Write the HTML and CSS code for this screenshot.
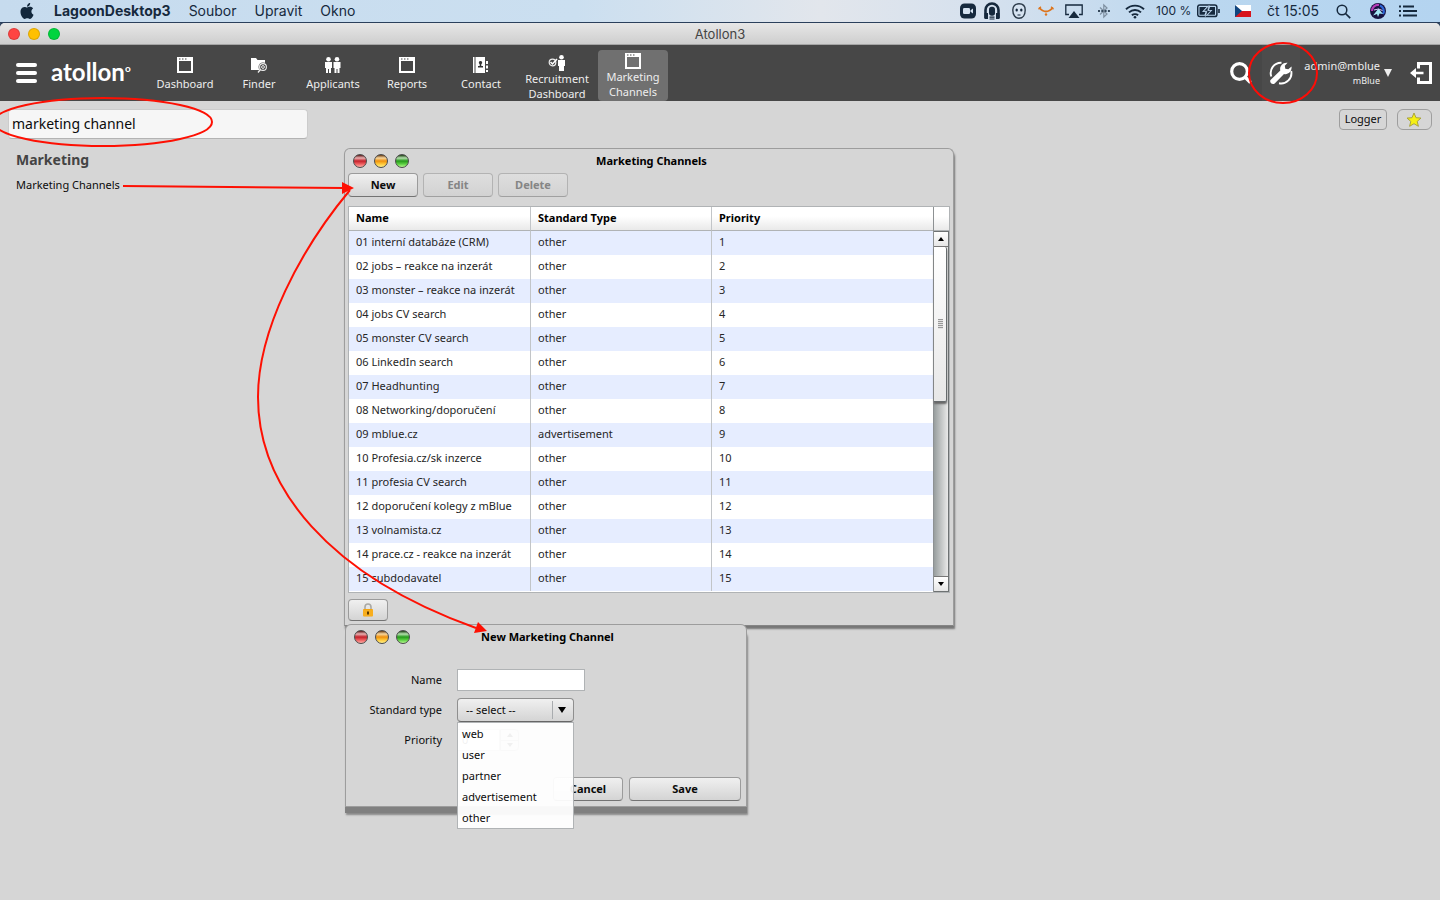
FILE: index.html
```html
<!DOCTYPE html>
<html lang="en">
<head>
<meta charset="utf-8">
<title>Atollon3</title>
<link rel="stylesheet" href="styles.css">
</head>
<body>
<header class="menubar">
  <nav class="menus">
    <svg class="apple" viewBox="0 0 24 24" width="16" height="16"><path fill="#13283c" d="M12.152 6.896c-.948 0-2.415-1.078-3.96-1.04-2.04.027-3.91 1.183-4.961 3.014-2.117 3.675-.546 9.103 1.519 12.09 1.013 1.454 2.208 3.09 3.792 3.039 1.52-.065 2.09-.987 3.935-.987 1.831 0 2.35.987 3.96.948 1.637-.026 2.676-1.48 3.676-2.948 1.156-1.688 1.636-3.325 1.662-3.415-.039-.013-3.182-1.221-3.22-4.857-.026-3.04 2.48-4.494 2.597-4.559-1.429-2.09-3.623-2.324-4.39-2.376-2-.156-3.675 1.09-4.61 1.09zM15.53 3.83c.843-1.012 1.4-2.427 1.245-3.83-1.207.052-2.662.805-3.532 1.818-.78.896-1.454 2.338-1.273 3.714 1.338.104 2.715-.688 3.559-1.701"/></svg>
    <strong>LagoonDesktop3</strong><span>Soubor</span><span>Upravit</span><span>Okno</span>
  </nav>
  <div class="status">
    <span class="slot s24"><svg width="16" height="16" viewBox="0 0 16 16"><rect width="16" height="15" y=".5" rx="4.5" fill="#16293d"/><rect x="3" y="5" width="7" height="6" rx="1.3" fill="#d5e2f0"/><path d="M10.5 7.3 13 5.4v5.2l-2.5-1.9z" fill="#d5e2f0"/></svg></span>
    <span class="slot s24"><svg width="16" height="18" viewBox="0 0 16 18"><path d="M1.500 16V8a6.500 6.500 0 0 1 13 0v8" fill="none" stroke="#16293d" stroke-width="2.600"/><path d="M.5 11v6h3.500v-6zM12 11v6h3.500v-6z" fill="#16293d"/><rect x="5" y="4.800" width="6" height="9" rx="2.800" fill="#16293d"/><path d="M5.500 15.200h5M5.500 17h5" stroke="#16293d" stroke-width="1.200"/></svg></span>
    <span class="slot s30"><svg width="14" height="16" viewBox="0 0 14 16"><path d="M7 .8c4 0 6.200 2.300 6.200 6.200 0 5-2.500 8.200-6.200 8.200S.8 12 .8 7C.8 3.100 3 .8 7 .8z" fill="#d5e2f0" stroke="#2b3a49" stroke-width="1.400"/><ellipse cx="4.700" cy="7" rx="1.200" ry="1.500" fill="#16293d"/><ellipse cx="9.300" cy="7" rx="1.200" ry="1.500" fill="#16293d"/><path d="M5.500 12h3" stroke="#16293d"/></svg></span>
    <span class="slot s24"><svg width="16" height="12" viewBox="0 0 16 12"><path d="M1 2.500q7 8 14 0" fill="none" stroke="#dd741c" stroke-width="1.800"/><path d="M.5 4.200 3 1.800M15.500 4.200 13 1.800" stroke="#dd741c" stroke-width="1.200"/><circle cx="8" cy="9.500" r="1.200" fill="#dd741c"/></svg></span>
    <span class="slot s32"><svg width="18" height="15" viewBox="0 0 18 15"><path d="M4 10.500H.8V1h16.400v9.500H14" fill="none" stroke="#16293d" stroke-width="1.300"/><path d="M9 7 14.500 14h-11z" fill="#16293d"/></svg></span>
    <span class="slot s28"><svg width="12" height="16" viewBox="0 0 12 16"><path d="m2 4.500 7 6.500-3.200 3V2L9 5 2 11.500" fill="none" stroke="#7f90a1" stroke-width="1.200"/><path d="M0 8h12" stroke="#34475a" stroke-width="2" stroke-dasharray="2 1.300"/></svg></span>
    <span class="slot s34"><svg width="20" height="15" viewBox="0 0 20 15"><path d="M1 5.200a13 13 0 0 1 18 0M4 8.400a8.800 8.800 0 0 1 12 0M6.900 11.300a4.600 4.600 0 0 1 6.200 0" fill="none" stroke="#16293d" stroke-width="1.900"/><circle cx="10" cy="13.300" r="1.300" fill="#16293d"/></svg></span>
    <span class="battery-text">100 %</span>
    <span class="slot s30"><svg width="23" height="14" viewBox="0 0 23 14"><rect x=".7" y="1" width="19.200" height="11.600" rx="2.200" fill="none" stroke="#16293d" stroke-width="1.500"/><path d="M2.500 3h7L5 8h3.500L7.500 10.700h-5zM13 3h5v7.700h-7L15.500 6H12z" fill="#16293d"/><path d="m12 1.500-5.500 5.700h3.300L8.400 12.500l5.800-6h-3.400z" fill="#16293d" stroke="#c3daef" stroke-width=".7"/><path d="M22 5v4" stroke="#16293d" stroke-width="1.600"/></svg></span>
    <span class="slot s40"><svg width="16" height="12" viewBox="0 0 16 12"><path fill="#fff" d="M0 0h16v6H0z"/><path fill="#d8141c" d="M0 6h16v6H0z"/><path fill="#11457e" d="m0 0 7 6-7 6z"/></svg></span>
    <span class="clock">čt 15:05</span>
    <span class="slot s36"><svg width="15" height="15" viewBox="0 0 15 15"><circle cx="6" cy="6" r="4.800" fill="none" stroke="#16293d" stroke-width="1.500"/><path d="m9.500 9.500 4.700 4.700" stroke="#16293d" stroke-width="1.700"/></svg></span>
    <span class="slot s30"><svg width="16" height="16" viewBox="0 0 16 16"><circle cx="8" cy="8" r="8" fill="#171340"/><path d="M2 8a6 6 0 0 1 7-6" stroke="#b53bb5" stroke-width="2.200" fill="none"/><path d="M10 2.500A6 6 0 0 1 13 11" stroke="#2f66d8" stroke-width="2.200" fill="none"/><path d="M8.500 5.500 3 12.500l4-1.500 1 3 1.500-3.500 3.500.5z" fill="#a5e8f6"/><path d="m4 7 4.500-1 4 1.500" stroke="#d8c6f6" fill="none"/></svg></span>
    <span class="slot s30"><svg width="18" height="12" viewBox="0 0 18 12"><path d="M0 1.500h2M0 6h2M0 10.500h2M4 1.500h11M4 6h14M4 10.500h14" stroke="#16293d" stroke-width="1.800"/></svg></span>
  </div>
</header>

<div class="titlebar">
  <div class="lights"><i class="red"></i><i class="amber"></i><i class="green"></i></div>
  <span>Atollon3</span>
</div>

<div class="toolbar">
  <button class="burger" aria-label="Menu"><i></i><i></i><i></i></button>
  <div class="brand">atollon<sup>o</sup></div>
  <nav class="apps">
    <button class="app"><svg width="16" height="16" viewBox="0 0 16 16"><use href="#frame"/></svg>Dashboard</button>
    <button class="app"><svg width="18" height="16" viewBox="0 0 18 16"><path d="M1 1h5l1.500 2H15v10H1z" fill="#fff"/><circle cx="13" cy="10" r="4.500" fill="#474747"/><circle cx="13" cy="10" r="3.400" fill="none" stroke="#eee" stroke-width="1.100"/><circle cx="13" cy="10" r="1.400" fill="none" stroke="#eee"/><path d="m10.500 12.500-2.500 3" stroke="#eee" stroke-width="1.300"/></svg>Finder</button>
    <button class="app"><svg width="18" height="16" viewBox="0 0 18 16"><g fill="#fff"><circle cx="4.500" cy="2.300" r="2.300"/><circle cx="13" cy="2.300" r="2.300"/><path d="M1 5h7v6H7v5H5v-4H4v4H2v-5H1zM9.500 5h7v6h-1v5h-2v-4h-1v4h-2v-5h-1z"/></g></svg>Applicants</button>
    <button class="app"><svg width="16" height="16" viewBox="0 0 16 16"><use href="#frame"/></svg>Reports</button>
    <button class="app"><svg width="16" height="16" viewBox="0 0 16 16"><path fill="#fff" d="M0 0h1.500v16H0zM2.500 0H12v16H2.500zM13 4h2v3h-2zM13 8.500h2v3h-2zM13 13h2v2h-2z"/><path fill="#333" d="M7.500 4a1.700 1.700 0 0 1 .8 3.200V9H10v1.500H5V9h1.700V7.200A1.700 1.700 0 0 1 7.500 4z"/></svg>Contact</button>
    <button class="app wide"><svg width="18" height="16" viewBox="0 0 18 16"><circle cx="4.500" cy="7.500" r="3.300" fill="none" stroke="#eee" stroke-width="1.200"/><path d="m2.500 7 2 2L9 4" fill="none" stroke="#fff" stroke-width="1.500"/><circle cx="13.500" cy="2.300" r="2.300" fill="#fff"/><path d="M10 5h7v6h-1v5h-5v-5h-1z" fill="#fff"/></svg>Recruitment Dashboard</button>
    <button class="app active"><svg width="16" height="16" viewBox="0 0 16 16"><g id="frame"><path d="M0 0h16v16H0zM2 4v10h12V4z" fill="#fff" fill-rule="evenodd"/><path d="M2 2h1.500M5 2h1.500M8 2h1.500" stroke="#474747" stroke-width="1.200"/></g></svg>Marketing Channels</button>
  </nav>
  <div class="tools">
    <button class="tool" aria-label="Search"><svg width="22" height="22" viewBox="0 0 22 22"><circle cx="9.500" cy="9.500" r="7.800" fill="none" stroke="#fff" stroke-width="3.200"/><path d="m15 15 5.500 5.500" stroke="#fff" stroke-width="3.600"/></svg></button>
    <button class="tool wrench" aria-label="Settings"><svg width="24" height="24" viewBox="0 0 24 24"><path d="M2.300 15.500A10.300 10.300 0 0 1 12.500 1.800M22.200 10A10.300 10.300 0 0 1 10 22.200" fill="none" stroke="#fff" stroke-width="1.900"/><path d="M1.500 19 11.300 9.500C10.300 5.500 13.500 1 18.600 1.800L15.800 4.800l.5 3 3 .5L22.500 5.400c.8 5-3.500 8.700-7.500 7.600L5.700 22.400C3.300 24 .2 21.500 1.500 19z" fill="#fff"/></svg>
      <svg class="ring" width="74" height="64" viewBox="0 0 74 64"><ellipse cx="37" cy="32" rx="34" ry="30" fill="none" stroke="#fe0c06" stroke-width="2"/></svg></button>
    <button class="account"><span>admin@mblue</span><small>mBlue</small></button>
    <i class="caret"></i>
    <button class="tool exit" aria-label="Log out"><svg width="24" height="24" viewBox="0 0 24 24"><path d="M9.500 7.500v-5h12v19h-12v-5" fill="none" stroke="#fff" stroke-width="3"/><path d="M14.500 10.700v2.600H7V17L1 12l6-5v3.700z" fill="#fff"/></svg></button>
  </div>
</div>

<main class="desktop">
  <div class="top-row">
    <input class="search" type="text" aria-label="Search settings" value="marketing channel">
    <div class="quick"><button class="logger">Logger</button><button class="star" aria-label="Favourite"><svg width="16" height="15" viewBox="0 0 16 15"><path d="m8 1 2 4.700 5 .4-3.800 3.300 1.200 4.900L8 11.700l-4.400 2.600 1.200-4.900L1 6.100l5-.4z" fill="#f6f013" stroke="#a8a340"/></svg></button></div>
  </div>
  <section class="results">
    <h2>Marketing</h2>
    <a href="#channels">Marketing Channels</a>
  </section>

  <section class="window channels" id="channels">
    <div class="window-title"><div class="orbs"><i class="o-red"></i><i class="o-amber"></i><i class="o-green"></i></div><h3>Marketing Channels</h3></div>
    <div class="actions"><button class="btn">New</button><button class="btn" disabled>Edit</button><button class="btn" disabled>Delete</button></div>
    <div class="grid">
      <div class="table-clip">
      <table>
        <colgroup><col class="c-name"><col class="c-type"><col></colgroup>
        <thead><tr><th>Name</th><th>Standard Type</th><th>Priority</th></tr></thead>
        <tbody>
          <tr><td>01 interní databáze (CRM)</td><td>other</td><td>1</td></tr>
          <tr><td>02 jobs – reakce na inzerát</td><td>other</td><td>2</td></tr>
          <tr><td>03 monster – reakce na inzerát</td><td>other</td><td>3</td></tr>
          <tr><td>04 jobs CV search</td><td>other</td><td>4</td></tr>
          <tr><td>05 monster CV search</td><td>other</td><td>5</td></tr>
          <tr><td>06 LinkedIn search</td><td>other</td><td>6</td></tr>
          <tr><td>07 Headhunting</td><td>other</td><td>7</td></tr>
          <tr><td>08 Networking/doporučení</td><td>other</td><td>8</td></tr>
          <tr><td>09 mblue.cz</td><td>advertisement</td><td>9</td></tr>
          <tr><td>10 Profesia.cz/sk inzerce</td><td>other</td><td>10</td></tr>
          <tr><td>11 profesia CV search</td><td>other</td><td>11</td></tr>
          <tr><td>12 doporučení kolegy z mBlue</td><td>other</td><td>12</td></tr>
          <tr><td>13 volnamista.cz</td><td>other</td><td>13</td></tr>
          <tr><td>14 prace.cz - reakce na inzerát</td><td>other</td><td>14</td></tr>
          <tr><td>15 subdodavatel</td><td>other</td><td>15</td></tr>
        </tbody>
      </table>
      </div>
      <div class="side">
        <div class="cap"></div>
        <div class="scroll"><button class="arrow" aria-label="Scroll up"><i class="up"></i></button><div class="track"><div class="thumb"><i></i></div></div><button class="arrow" aria-label="Scroll down"><i class="down"></i></button></div>
      </div>
    </div>
    <button class="btn lock" aria-label="Lock"><svg width="12" height="14" viewBox="0 0 12 14"><path d="M3 7V4a3 3 0 0 1 6 0v3" fill="none" stroke="#aaa9a4" stroke-width="1.600"/><rect x="1" y="6" width="10" height="7.500" rx="1" fill="#f5a50f"/><path d="M1 8h10M1 10h10M1 12h10" stroke="#ffc545" stroke-width=".6"/><path d="M5 8.500h2v3H5z" fill="#5b3900"/></svg></button>
  </section>

  <section class="window dialog">
    <div class="window-title"><div class="orbs"><i class="o-red"></i><i class="o-amber"></i><i class="o-green"></i></div><h3>New Marketing Channel</h3></div>
    <form class="form">
      <label for="name">Name</label><input id="name" class="field" type="text">
      <label for="type">Standard type</label>
      <div class="combo"><select id="type"><option>-- select --</option></select><i class="down"></i>
        <ul class="options"><li>web</li><li>user</li><li>partner</li><li>advertisement</li><li>other</li></ul>
      </div>
      <label for="priority">Priority</label>
      <div class="stepper"><input id="priority" type="text" value="0"><div class="steps"><button type="button" aria-label="Increase"><i class="up"></i></button><button type="button" aria-label="Decrease"><i class="down"></i></button></div></div>
    </form>
    <div class="dialog-actions"><button class="btn">Cancel</button><button class="btn save">Save</button></div>
  </section>

  <svg class="notes" width="500" height="560" viewBox="0 0 500 560">
    <g fill="none" stroke="#fe1003" stroke-width="2"><ellipse cx="103" cy="21" rx="109" ry="24"/><path d="M123 85 344 87M350 89C300 149 258 229 258 296C258 386 328 474 476 527"/></g>
    <path d="m342 81 12 6-12 6zM478 521 487 530l-13 2z" fill="#fe1003"/>
  </svg>
</main>
</body>
</html>
```
FILE: styles.css
```css
* { box-sizing: border-box; }
body { margin: 0; min-height: 100vh; display: flex; flex-direction: column; background: #d6d6d6; color: #0b0b0b; font: 11px/16px "Noto Sans", "Open Sans", sans-serif; }
button, input, select { font: inherit; color: inherit; margin: 0; padding: 0; border: 0; background: none; border-radius: 0; }
h2, h3, ul { margin: 0; padding: 0; list-style: none; }
svg { display: block; flex: none; }

.menubar { position: relative; z-index: 1; height: 23px; flex: none; display: flex; justify-content: space-between; align-items: center; padding: 0 17px 0 19px; color: #16293d; font: 14px/20px Inter, sans-serif; border-bottom: 1px solid #2b405c; background: linear-gradient(90deg, #c6dbee 0%, #cbdff0 40%, #e2e6ec 57%, #d6e1ee 68%, #bad7ef 84%, #b4d4f0 100%); }
.menus, .status { display: flex; align-items: center; white-space: nowrap; }
.menus { gap: 18px; }
.apple { margin-right: 1px; }
.slot { display: flex; justify-content: center; }
.s24 { width: 24px; }
.s28 { width: 28px; }
.s30 { width: 30px; }
.s32 { width: 32px; }
.s34 { width: 34px; }
.s36 { width: 40px; }
.s40 { width: 40px; }
.battery-text { width: 41px; padding-left: 4px; font-size: 12px; }
.clock { width: 60px; padding-left: 4px; }

.titlebar { position: relative; height: 22px; flex: none; display: grid; grid-template-columns: 1fr auto 1fr; align-items: center; padding: 0 8px; border-radius: 5px 5px 0 0; border-bottom: 1px solid #a5a5a5; background: linear-gradient(#e7e7e7, #cecece); box-shadow: 0 -4px 0 #2b405c; font: 13px/18px Inter, sans-serif; color: #444; }
.lights { display: flex; gap: 8px; }
.lights i { width: 12px; height: 12px; border-radius: 50%; border: 1px solid #0002; }
.red { background: #fe4442; }
.amber { background: #ffc000; }
.green { background: #00d43e; }

.toolbar { height: 56px; flex: none; display: flex; align-items: center; background: #474747; color: #eee; padding: 0 7px 0 16px; }
.burger { width: 21px; display: grid; gap: 4px; }
.burger i { height: 4px; border-radius: 2px; background: #fff; }
.brand { width: 113px; padding: 0 0 2px 14px; color: #fff; font: 700 24px/32px Lato, sans-serif; }
.brand sup { font-size: 10px; line-height: 0; vertical-align: 9px; }
.apps { display: flex; gap: 4px; align-self: stretch; align-items: flex-end; }
.app { width: 70px; height: 51px; display: flex; flex-direction: column; align-items: center; gap: 3px; padding-top: 7px; line-height: 15px; border-radius: 4px; }
.wide { width: 74px; gap: 0; padding-top: 5px; }
.active { gap: 0; padding-top: 3px; background: #707070; }
.tools { margin-left: auto; display: flex; align-items: center; align-self: stretch; }
.tool { display: flex; align-items: center; justify-content: center; }
.wrench { width: 38px; align-self: stretch; margin-left: 10px; background: #4c4c4c; position: relative; }
.ring { position: absolute; left: -16px; top: -4px; z-index: 2; pointer-events: none; }
.account { display: grid; justify-items: end; line-height: 15px; margin-left: 4px; padding-bottom: 1px; }
.account small { font-size: 9px; }
.caret { margin: 0 17px 0 4px; border: 4px solid transparent; border-top: 8px solid #eee; border-bottom: 0; }

.desktop { flex: 1; position: relative; }
.top-row { display: flex; justify-content: space-between; align-items: flex-start; padding: 8px 8px 0; }
.search { width: 300px; height: 30px; padding: 0 3px 2px; border: 1px solid #bbb; border-color: #ccc #ccc #b3b3b3; border-radius: 4px; background: #f6f6f6; font-size: 14px; }
.quick { display: flex; gap: 10px; }
.quick button { height: 21px; padding-bottom: 2px; border: 1px solid #9e9e9e; border-radius: 4px; }
.logger { width: 48px; }
.quick .star { width: 35px; padding: 0 2px 0 0; border-radius: 6px; display: grid; place-items: center; }
.results { padding: 11px 16px; display: grid; gap: 7px; justify-items: start; }
.results h2 { font-size: 14px; line-height: 20px; color: #444; }
.results a { color: inherit; text-decoration: none; line-height: 16px; }

.window { position: absolute; border: 1px solid #9d9d9d; border-radius: 6px 6px 0 0; background: #d6d6d6; }
.channels { left: 344px; top: 47px; width: 610px; padding: 0 3px 4px; box-shadow: 1px 3px 2px #777; border-bottom-color: #858585; }
.dialog { left: 345px; top: 523px; width: 402px; padding: 0 5px 5px; box-shadow: 0 6px 0 #808080, 1px 8px 2px #888; }
.window-title { height: 24px; display: grid; grid-template-columns: 1fr auto 1fr; align-items: center; padding-left: 5px; }
.window-title h3 { font-size: 11px; line-height: 16px; color: #000; }
.orbs { display: flex; gap: 7px; }
.dialog .window-title { padding-left: 3px; }
.orbs i { width: 14px; height: 14px; border-radius: 50%; border: 1px solid #4a4a4a; }
.o-red { background: linear-gradient(#5c1616, #e9b2b2 25%, #c4202a 50%, #ee5f60 75%, #ffb0a8); }
.o-amber { background: linear-gradient(#6a3a10, #f7d7a0 25%, #ef900c 50%, #ffc93a 75%, #fff08a); }
.o-green { background: linear-gradient(#1b3f12, #b5e0ae 25%, #249a1a 50%, #5ccf42 75%, #b6fb92); }

.btn { width: 70px; height: 24px; padding-bottom: 1px; border: 1px solid #9b9b9b; border-bottom-color: #737373; border-radius: 4px; background: linear-gradient(#f0f0f0, #d4d4d4); font-weight: 700; }
.btn:disabled { color: #858585; border-color: #b3b3b3; border-bottom-color: #a0a0a0; background: linear-gradient(#dedede, #d2d2d2); }
.actions { display: flex; gap: 5px; }
.grid { display: flex; margin: 9px 0 6px; border: 1px solid #b0b3b5; background: #fff; }
.table-clip { flex: 1; padding-bottom: 1px; }
table { width: 100%; table-layout: fixed; border-collapse: separate; border-spacing: 0; }
.c-name { width: 182px; }
.c-type { width: 181px; }
th, td { height: 24px; padding: 0 7px 2px; text-align: left; white-space: nowrap; border-right: 1px solid #c2c5c8; line-height: 16px; }
th:last-child, td:last-child { border-right: 0; }
th { border-bottom: 1px solid #b0b3b5; background: linear-gradient(#fff 40%, #e9e9e9); color: #000; }
td { color: #262626; }
tbody tr:nth-child(odd) { background: #e6edff; }
.side { width: 16px; display: flex; flex-direction: column; border-left: 1px solid #8d9193; }
.cap { height: 24px; border-bottom: 1px solid #b0b3b5; background: linear-gradient(#fff 40%, #e9e9e9); }
.scroll { flex: 1; display: flex; flex-direction: column; border: 1px solid #6e7273; border-width: 1px 1px 1px 0; }
.arrow { height: 15px; display: grid; place-items: center; background: linear-gradient(#fff, #e6e6e6); border-bottom: 1px solid #777; }
.arrow:last-child { border-bottom: 0; border-top: 1px solid #777; }
.up, .down { width: 0; border: 3px solid transparent; }
.up { border-bottom: 4px solid #000; border-top: 0; }
.down { border-top: 4px solid #000; border-bottom: 0; }
.track { flex: 1; background: linear-gradient(90deg, #989e9e, #e9e9e9); }
.thumb { width: 13px; height: 47%; display: grid; place-items: center; border: 1px solid #666b6d; border-width: 0 1px 1px 0; border-radius: 0 2px 2px 0; background: linear-gradient(#fff, #e7e7e7); box-shadow: 0 2px 2px #666; }
.thumb i { width: 5px; height: 10px; background: repeating-linear-gradient(#999 0 1px, #e4e4e4 1px 2px); }
.lock { width: 40px; height: 22px; display: grid; place-items: center; }

.form { display: grid; grid-template-columns: 91px 1fr; column-gap: 15px; row-gap: 7px; align-items: center; padding-top: 20px; }
.form label { text-align: right; }
.field { width: 128px; height: 22px; border: 1px solid #b0b3b5; background: #fff; }
.combo { width: 117px; height: 24px; position: relative; display: flex; align-items: center; border: 1px solid #8f8f8f; border-bottom-color: #666; border-radius: 4px; background: linear-gradient(#f0f0f0, #d4d4d4); }
.combo select { appearance: none; width: 95px; height: 18px; padding-left: 8px; border-right: 1px solid #a9acaf; }
.combo > .down { margin-left: 5px; border-width: 6px 4px 0; }
.options { position: absolute; left: -1px; right: -1px; top: 23px; z-index: 2; border: 1px solid #b0b3b5; background: #fffffff0; }
.options li { height: 21px; padding: 0 4px; line-height: 21px; }
.stepper { display: flex; height: 22px; width: 62px; }
.stepper input { width: 43px; padding-left: 4px; border: 1px solid #b0b3b5; background: #fff; }
.steps { width: 19px; display: grid; border: 1px solid #999; border-radius: 0 4px 4px 0; }
.steps button { display: grid; place-items: center; }
.steps button + button { border-top: 1px solid #999; }
.dialog-actions { display: flex; justify-content: flex-end; gap: 6px; margin-top: 26px; }
.save { width: 112px; }
.notes { position: absolute; left: 0; top: 0; overflow: visible; pointer-events: none; }
```
